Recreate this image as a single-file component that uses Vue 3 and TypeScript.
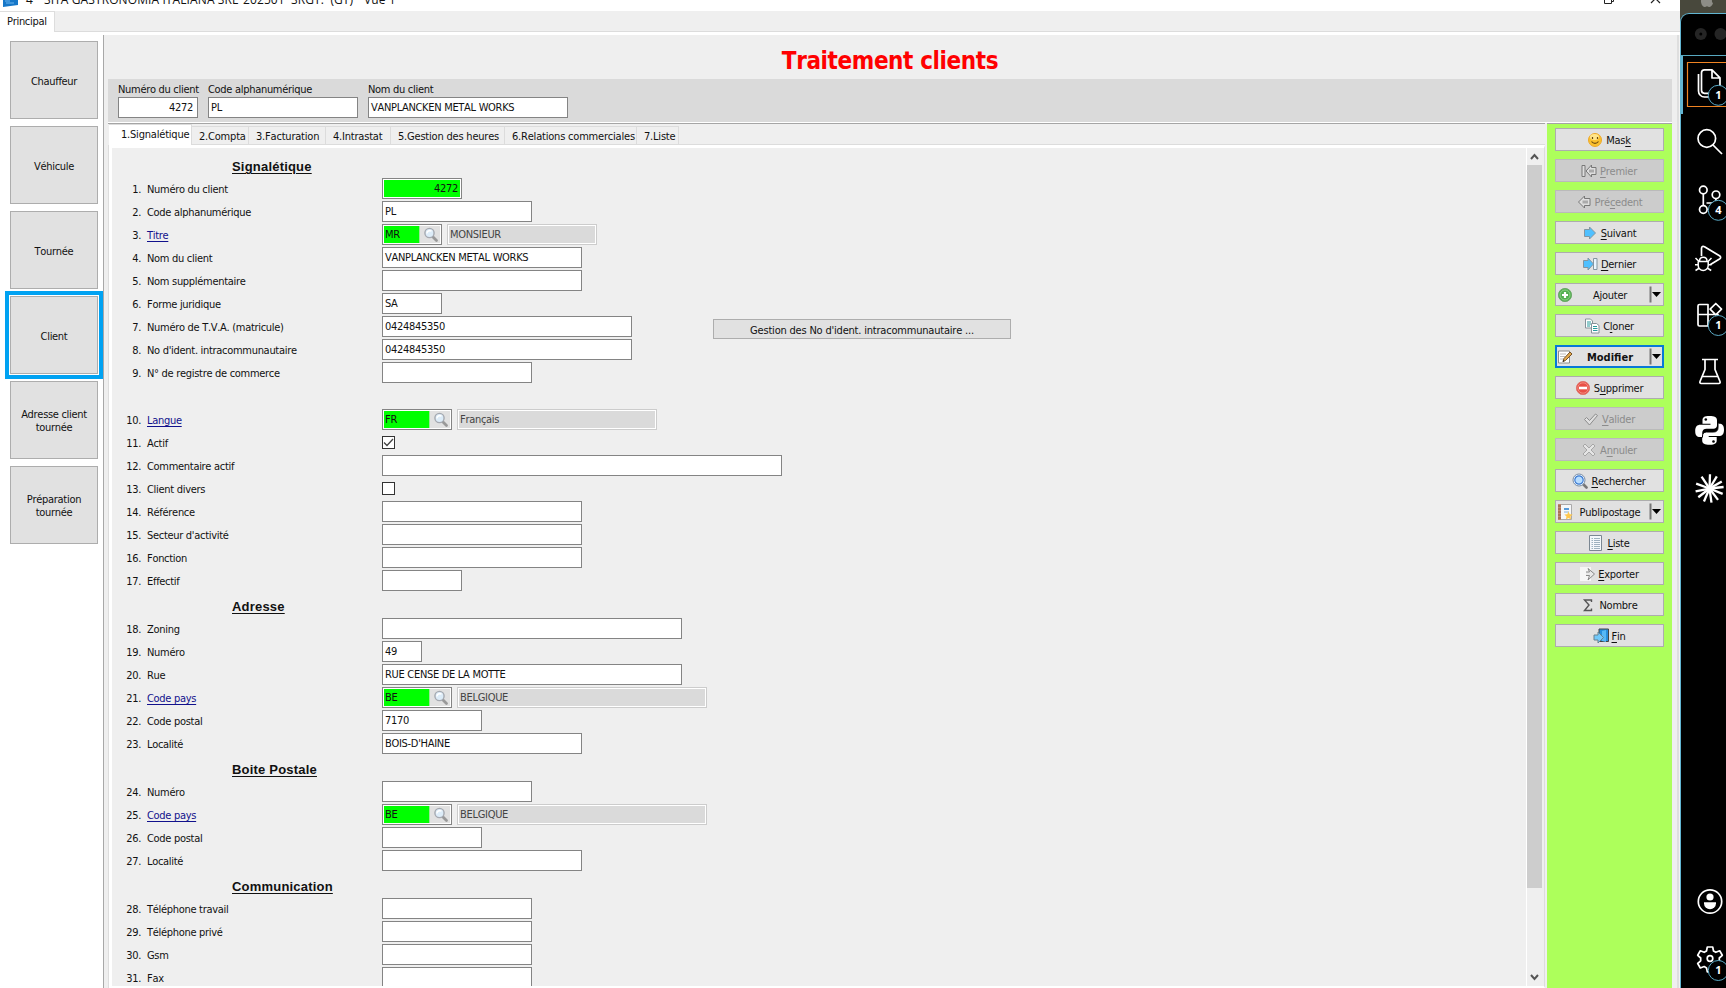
<script setup lang="ts">
interface Field {
  label: string
  kind?: 'text' | 'number' | 'lookup' | 'check'
  width?: number
  value?: string
  text?: string
  textWidth?: number
  gapBefore?: boolean
  checked?: boolean
}
interface Section { title: string; start: number; fields: Field[] }
interface Action {
  pre: string
  key: string
  post: string
  icon: string
  disabled?: boolean
  split?: boolean
  active?: boolean
}

const modules = ['Chauffeur', 'Véhicule', 'Tournée', 'Client', 'Adresse client\ntournée', 'Préparation\ntournée']

const tabs = [
  { name: '1.Signalétique', width: 83 },
  { name: '2.Compta', width: 57 },
  { name: '3.Facturation', width: 77 },
  { name: '4.Intrastat', width: 65 },
  { name: '5.Gestion des heures', width: 114 },
  { name: '6.Relations commerciales', width: 132 },
  { name: '7.Liste', width: 42 },
]

const sections: Section[] = [
  {
    title: 'Signalétique',
    start: 1,
    fields: [
      { label: 'Numéro du client', kind: 'number', width: 80, value: '4272' },
      { label: 'Code alphanumérique', width: 150, value: 'PL' },
      { label: 'Titre', kind: 'lookup', width: 60, value: 'MR', text: 'MONSIEUR', textWidth: 150 },
      { label: 'Nom du client', width: 200, value: 'VANPLANCKEN METAL WORKS' },
      { label: 'Nom supplémentaire', width: 200 },
      { label: 'Forme juridique', width: 60, value: 'SA' },
      { label: 'Numéro de T.V.A. (matricule)', width: 250, value: '0424845350' },
      { label: "No d'ident. intracommunautaire", width: 250, value: '0424845350' },
      { label: 'N° de registre de commerce', width: 150 },
      { label: 'Langue', kind: 'lookup', width: 70, value: 'FR', text: 'Français', textWidth: 200, gapBefore: true },
      { label: 'Actif', kind: 'check', checked: true },
      { label: 'Commentaire actif', width: 400 },
      { label: 'Client divers', kind: 'check' },
      { label: 'Référence', width: 200 },
      { label: "Secteur d'activité", width: 200 },
      { label: 'Fonction', width: 200 },
      { label: 'Effectif', width: 80 },
    ],
  },
  {
    title: 'Adresse',
    start: 18,
    fields: [
      { label: 'Zoning', width: 300 },
      { label: 'Numéro', width: 40, value: '49' },
      { label: 'Rue', width: 300, value: 'RUE CENSE DE LA MOTTE' },
      { label: 'Code pays', kind: 'lookup', width: 70, value: 'BE', text: 'BELGIQUE', textWidth: 250 },
      { label: 'Code postal', width: 100, value: '7170' },
      { label: 'Localité', width: 200, value: "BOIS-D'HAINE" },
    ],
  },
  {
    title: 'Boite Postale',
    start: 24,
    fields: [
      { label: 'Numéro', width: 150 },
      { label: 'Code pays', kind: 'lookup', width: 70, value: 'BE', text: 'BELGIQUE', textWidth: 250 },
      { label: 'Code postal', width: 100 },
      { label: 'Localité', width: 200 },
    ],
  },
  {
    title: 'Communication',
    start: 28,
    fields: [
      { label: 'Téléphone travail', width: 150 },
      { label: 'Téléphone privé', width: 150 },
      { label: 'Gsm', width: 150 },
      { label: 'Fax', width: 150 },
    ],
  },
]

const actions: Action[] = [
  { pre: 'Mas', key: 'k', post: '', icon: 'smile' },
  { pre: '', key: 'P', post: 'remier', icon: 'first', disabled: true },
  { pre: 'Pré', key: 'c', post: 'edent', icon: 'prev', disabled: true },
  { pre: '', key: 'S', post: 'uivant', icon: 'next' },
  { pre: '', key: 'D', post: 'ernier', icon: 'last' },
  { pre: 'Ajouter', key: '', post: '', icon: 'add', split: true },
  { pre: 'C', key: 'l', post: 'oner', icon: 'clone' },
  { pre: 'Modifier', key: '', post: '', icon: 'edit', split: true, active: true },
  { pre: 'S', key: 'u', post: 'pprimer', icon: 'remove' },
  { pre: '', key: 'V', post: 'alider', icon: 'check', disabled: true },
  { pre: 'A', key: 'n', post: 'nuler', icon: 'cross', disabled: true },
  { pre: '', key: 'R', post: 'echercher', icon: 'search' },
  { pre: 'Publipostage', key: '', post: '', icon: 'mail', split: true },
  { pre: '', key: 'L', post: 'iste', icon: 'list' },
  { pre: '', key: 'E', post: 'xporter', icon: 'export' },
  { pre: 'Nombre', key: '', post: '', icon: 'sum' },
  { pre: '', key: 'F', post: 'in', icon: 'exit' },
]

const rays = [2, 31, 60, 84, 112, 143, 172, 203, 232, 258, 290, 326]
</script>

<template>
  <div class="desktop">
    <div class="app">
      <header class="titlebar">
        <div class="title-content">
          <svg class="app-icon" width="15" height="14" viewBox="0 0 15 14"><path d="M0 1 15 0V12L0 14Z" fill="#1677c8" /><path d="M2 8h5M8 6h5M3 10h8" stroke="#6bb5ee" /></svg>
          <span class="t-num">4</span><span class="t-co">SITA GASTRONOMIA ITALIANA SRL</span><span class="t-period">202501</span><span class="t-app">SRGT.&nbsp; (GT)</span><span>Vue 1</span>
        </div>
        <div class="window-controls">
          <svg width="60" height="14" viewBox="0 0 60 14"><path d="M.5 3.5h7v7h-7zM2.500 1.500h7v7h-2" fill="none" stroke="#222" /><path d="m47 1 9 9m0-9-9 9" stroke="#222" stroke-width="1.200" /></svg>
        </div>
      </header>
      <div class="main-tabs"><span class="main-tab">Principal</span></div>

      <div class="workspace">
        <nav class="modules">
          <button v-for="m in modules" :key="m" class="module" :class="{ selected: m === 'Client' }"><span>{{ m }}</span></button>
        </nav>

        <main class="screen">
          <h1><span>Traitement clients</span></h1>
          <div class="summary">
            <label class="s1"><span>Numéro du client</span><i class="box right">4272</i></label>
            <label class="s2"><span>Code alphanumérique</span><i class="box">PL</i></label>
            <label class="s3"><span>Nom du client</span><i class="box">VANPLANCKEN METAL WORKS</i></label>
          </div>

          <div class="body">
            <div class="pane">
              <div class="tabs">
                <span v-for="(t, i) in tabs" :key="t.name" class="tab" :class="{ current: i === 0 }" :style="{ width: t.width + 'px' }">{{ t.name }}</span>
              </div>
              <div class="sheet">
                <div class="form">
                  <section v-for="s in sections" :key="s.title">
                    <h2>{{ s.title }}</h2>
                    <div v-for="(f, i) in s.fields" :key="i" class="row" :class="{ gap: f.gapBefore }">
                      <span class="no">{{ s.start + i }}.</span>
                      <span class="name"><span :class="{ link: f.kind === 'lookup' }">{{ f.label }}</span></span>
                      <template v-if="f.kind === 'lookup'">
                        <span class="lookup" :style="{ width: f.width + 'px' }">
                          <span class="code">{{ f.value }}</span>
                          <span class="lens">
                            <svg width="16" height="16" viewBox="0 0 16 16"><path d="m9.500 9.500 4 4" stroke="#999" stroke-width="2.800" stroke-linecap="round" /><circle cx="6.500" cy="6" r="4.600" fill="#dcecf8" stroke="#a5a9b0" stroke-width="1.400" /><path d="M3.800 6.500C4.200 4 6 3.200 8.500 4" stroke="#fff" stroke-width="1.500" fill="none" /></svg>
                          </span>
                        </span>
                        <span class="desc" :style="{ width: f.textWidth + 'px' }">{{ f.text }}</span>
                      </template>
                      <span v-else-if="f.kind === 'check'" class="checkbox">
                        <svg v-if="f.checked" width="11" height="11" viewBox="0 0 11 11"><path d="m1 5.500 3 3 6-6.500" fill="none" stroke="#444" stroke-width="1.300" /></svg>
                      </span>
                      <i v-else class="box" :class="{ 'right key': f.kind === 'number' }" :style="{ width: f.width + 'px' }"><span>{{ f.value }}</span></i>
                      <button v-if="i === 6 && s.start === 1" class="ident">Gestion des No d'ident. intracommunautaire ...</button>
                    </div>
                  </section>
                </div>
                <div class="scrollbar">
                  <svg width="15" height="17" viewBox="0 0 15 17"><path d="m4 11 3.500-4 3.500 4" fill="none" stroke="#555" stroke-width="2" /></svg>
                  <div class="thumb"></div>
                  <svg class="down" width="15" height="17" viewBox="0 0 15 17"><path d="m4 6 3.500 4L11 6" fill="none" stroke="#555" stroke-width="2" /></svg>
                </div>
              </div>
            </div>

            <aside class="actions">
              <button v-for="a in actions" :key="a.icon" class="action" :class="{ disabled: a.disabled, split: a.split, active: a.active }">
                <svg class="icon" width="16" height="16" viewBox="0 0 16 16">
                  <template v-if="a.icon === 'smile'"><circle cx="8" cy="8" r="6.500" fill="#fbc02c" stroke="#eda92a" /><ellipse cx="7.500" cy="5" rx="4.500" ry="3" fill="#ffe58a" /><path d="M5.500 5v2m5-2v2M4.500 9.500c2 2.500 5 2.500 7 0" fill="none" stroke="#6b4a10" stroke-width="1.200" /></template>
                  <g v-else-if="a.icon === 'first'" fill="#dedede" stroke="#777"><path d="M1 2.500h3v11H1zM15 4.500v7h-4.500V14L5 8l5.500-6v2.500z" /><path d="M8 6.500h5v3H8z" fill="#aaa" stroke="none" /></g>
                  <g v-else-if="a.icon === 'prev'" fill="#dedede" stroke="#777"><path d="M14 4.500v7H8.500V14l-6-6 6-6v2.500z" /><path d="M6.500 6.500H12v3H6.500z" fill="#aaa" stroke="none" /></g>
                  <path v-else-if="a.icon === 'next'" d="M2.500 4.500v7h5V14l6-6-6-6v2.500z" fill="#4fc0ff" stroke="#8495a0" />
                  <g v-else-if="a.icon === 'last'" fill="#4fc0ff" stroke="#8495a0"><path d="M11.500 2.500H15v11h-3.500z" fill="#e8f5ff" /><path d="M1.500 4.500v7H6V14l5.500-6L6 2v2.500z" /></g>
                  <template v-else-if="a.icon === 'add'"><circle cx="8" cy="8" r="6.600" fill="#53ae50" stroke="#6eaa6a" /><circle cx="8" cy="8" r="5" fill="none" stroke="#8bd184" /><path d="M8 5v6M5 8h6" stroke="#fff" stroke-width="2.200" /></template>
                  <g v-else-if="a.icon === 'clone'" fill="#fff" stroke="#879198"><path d="M1.500 1h5l2 2v7h-7z" /><path d="M3 4h4M3 6h4M3 8h3" stroke="#289a9c" /><path d="M7.500 5.500h5l2.500 2V15H7.500z" /><path d="M9 8.500h4M9 10.500h4.500M9 12.500h4.500" stroke="#289a9c" /></g>
                  <template v-else-if="a.icon === 'edit'"><path d="M1.500 2h11v12h-11z" fill="#fff" stroke="#8d8d8d" /><path d="M3 5h6M3 7.500h5M3 10h4" stroke="#bcbcbc" /><path d="m6 12.500 1-3L13 3l2 2-6.500 6.500z" fill="#e2a94d" stroke="#765126" /><path d="m5.500 13 1-2 1 1z" fill="#222" /></template>
                  <template v-else-if="a.icon === 'remove'"><circle cx="8" cy="8" r="6.600" fill="#e84f46" stroke="#df7770" /><circle cx="8" cy="8" r="5.200" fill="none" stroke="#f28b80" /><path d="M4 8h8" stroke="#fff" stroke-width="2.600" /></template>
                  <path v-else-if="a.icon === 'check'" d="m1.500 8.500 2-2 3 3 6-6.500 2 1.500-8 9.500z" fill="#dfdfdf" stroke="#8c8c8c" />
                  <path v-else-if="a.icon === 'cross'" d="m2 4 2-2 4 4 4-4 2 2-4 4 4 4-2 2-4-4-4 4-2-2 4-4z" fill="#e4e4e4" stroke="#a6a6a6" />
                  <template v-else-if="a.icon === 'search'"><path d="m11 11 3.500 3.500" stroke="#777" stroke-width="2.600" stroke-linecap="round" /><circle cx="7" cy="7" r="6" fill="#fff" stroke="#758ba5" /><circle cx="7" cy="7" r="4.200" fill="#b8ddff" stroke="#3878d0" stroke-width="1.200" /></template>
                  <template v-else-if="a.icon === 'mail'"><path d="M1.500.500h13v15h-13z" fill="#f5f7f9" stroke="#aaa" /><path d="M2.500 0v16" stroke="#c08a6c" stroke-width="3" /><path d="M1 2h3M1 5h3M1 8h3M1 11h3M1 14h3" stroke="#8c5a40" /><path d="M7 4h5v2H7z" fill="#579bd9" /><path d="M7 8h5" stroke="#8ab0d0" /><path d="m11.500 7.500 1.200 2.700 3 .3-2.200 2 .7 3-2.700-1.600L8.800 15.500l.7-3-2.200-2 3-.3z" fill="#ffc74d" /></template>
                  <template v-else-if="a.icon === 'list'"><path d="M1.500.500h12v15h-12z" fill="#f4f8fb" stroke="#7b8792" /><path d="M3.500 3.500h1.500m1 0h6m-8.500 2h1.500m1 0h6m-8.500 2h1.500m1 0h6m-8.500 2h1.500m1 0h6m-8.500 2h1.500m1 0h6m-8.500 2h1.500m1 0h6" stroke="#94a9b8" stroke-width=".9" /></template>
                  <template v-else-if="a.icon === 'export'"><path d="M1 1h11v14H1z" fill="#f6f6f6" /><path d="M7 6h3.500L9 2.500l6.500 5.500L9 14l1.500-4.500H7" fill="#e8e8e8" stroke="#888" /></template>
                  <path v-else-if="a.icon === 'sum'" d="M11.500 5V3h-7L9 8l-4.500 5.500h7v-2" fill="none" stroke="#555" stroke-width="1.400" />
                  <template v-else><path d="M6 1h9.500v12.500H6z" fill="#278edc" stroke="#444" /><path d="m9 3 4-1v12l-4-1z" fill="#56b9f6" /><path d="M1 7h4V4l5.500 5.500L5 15v-3H1z" fill="#72c9fa" stroke="#66818e" /></template>
                </svg>
                <span class="caption">{{ a.pre }}<u v-if="a.key">{{ a.key }}</u>{{ a.post }}</span>
                <svg v-if="a.split" class="drop" width="14" height="19" viewBox="0 0 14 19"><path d="M1.500 1.500v16" stroke="#777" stroke-width="2" /><path d="M3 7h9L7.500 12z" fill="#000" /></svg>
              </button>
            </aside>
          </div>
        </main>
      </div>
    </div>

    <div class="editor">
      <div class="menubar"><svg width="14" height="8" viewBox="0 0 14 8"><path d="M1 0h11c-.5 1.500.5 3 1 3.300C12 6 10.500 7 9.500 7S8 6.200 7 6.200 5.500 7 4.500 7C2.500 7 .5 3 1 0z" fill="#8d8d86" /></svg></div>
      <div class="editor-window">
        <svg class="activity" width="46" height="975" viewBox="1680 13 46 975" fill="none" stroke="#fff" stroke-width="1.700" stroke-linejoin="round">
          <g stroke="none"><circle cx="1700.800" cy="34" r="6" fill="#252525" /><circle cx="1700.800" cy="34" r="1.500" fill="#000" /><circle cx="1720.500" cy="34" r="6" fill="#252525" /></g>
          <path d="M1681 55.500h45" stroke="#57a8c0" stroke-width="1" />
          <path d="M1681.500 56v58" stroke="#62b5d2" stroke-width="3" />
          <path d="M1727 62.500h-39.500v44H1727" stroke="#ef8322" stroke-width="1.200" stroke-linejoin="miter" />
          <path d="M1704.500 69.800h7.500l8 8v12.500a3 3 0 0 1-3 3h-12.500a3 3 0 0 1-3-3V72.800a3 3 0 0 1 3-3zM1712 70v8h8M1698.500 74v17a6 6 0 0 0 6 6h8" />
          <circle cx="1706.800" cy="138.500" r="8.800" /><path d="m1713 145 9 9" />
          <circle cx="1703.300" cy="190" r="3.800" /><circle cx="1716" cy="194.800" r="3.800" /><circle cx="1703.300" cy="209.500" r="3.800" /><path d="M1703.300 194v11.500M1716 199c0 3-2 4-5 4h-4.500" />
          <path d="M1701.500 256v-7.500c0-2 1.500-2.500 3-1.700l15 9c1.500 1 1.500 2.200 0 3.200l-9 5.500" /><path d="M1698.200 261.500h10v4a5 5 0 0 1-10 0zM1699.500 261c0-5 7.500-5 7.500 0M1695.500 258l3 3m10 0 3-3M1695 264.800h3m10.500 0h3M1695.500 270.500l3.200-2m9.300 0 3.200 2" stroke-width="1.500" />
          <path d="M1699.500 304.500h8.500v10h-10V306a1.500 1.500 0 0 1 1.500-1.500zM1698 314.500h10V326h-8.500a1.500 1.500 0 0 1-1.500-1.500zM1708 314.500h10v10.500a1 1 0 0 1-1 1h-9zM1715.800 303.500l5.700 5.700-5.700 5.700-5.700-5.700z" />
          <path d="M1702 359.500h16M1705 360v9.500l-5 12c-.4 1.200 0 2 1.200 2h17.600c1.200 0 1.600-.8 1.200-2l-5-12V360M1702.300 376.500h15.400" />
          <path d="M1709.500 416c-5.500 0-7 1.500-7 4.200v3.500h8v1h-10c-3.600 0-5.300 2-5.300 6.300 0 4.200 1.500 6 5 6h2v-4c0-2.700 1.700-4.200 4.500-4.200h6.800c2.200 0 3.500-1.200 3.500-3.500v-5c0-3-2.500-4.300-7.500-4.300z" fill="#fff" stroke="none" />
          <path d="M1709.700 444.800c5.500 0 7-1.500 7-4.200v-3.500h-8v-1h10c3.600 0 5.300-2 5.300-6.300 0-4.200-1.500-6-5-6h-1v4c0 2.700-1.700 4.200-4.500 4.200h-6.800c-2.200 0-4.500 1.200-4.500 3.500v5c0 3 2.500 4.300 7.500 4.300z" fill="#fff" stroke="none" />
          <path d="M1718 424v3.500c0 3-1.500 4.500-4.500 4.500h-7c-2.500 0-4 1.500-4 4v1.500" stroke="#000" stroke-width="1" />
          <circle cx="1705.800" cy="419.500" r="1.300" fill="#000" stroke="none" /><circle cx="1713.500" cy="441.500" r="1.300" fill="#000" stroke="none" />
          <path v-for="r in rays" :key="r" d="M1709.500 488.500v-14.200" stroke-width="2.300" :transform="`rotate(${r} 1709.500 488.500)`" />
          <circle cx="1710" cy="901.500" r="11.700" /><g fill="#fff" stroke="none"><circle cx="1710" cy="897" r="3.600" /><path d="M1704 902.300h12v1a6 6 0 0 1-12 0z" /></g>
          <path d="M1707.300 947h5.400l.8 4 2.300 1.300 3.900-1.500 2.600 4.500-3 2.700v2.800l3 2.700-2.600 4.500-3.900-1.500-2.300 1.400-.8 4h-5.400l-.8-4-2.300-1.400-3.900 1.500-2.600-4.500 3-2.700v-2.800l-3-2.700 2.600-4.500 3.900 1.500 2.300-1.300z" /><circle cx="1710" cy="958.500" r="2.800" />
          <g fill="#000" stroke="#5aaac6" stroke-width="1"><circle cx="1718.300" cy="95.300" r="10" /><circle cx="1718.300" cy="210.300" r="10" /><circle cx="1718.300" cy="325.500" r="10" /><circle cx="1718.300" cy="970.500" r="10" /></g>
          <g class="badges" fill="#fff" stroke="none" text-anchor="middle"><text x="1718.500" y="99.300">1</text><text x="1718.500" y="214.300">4</text><text x="1718.500" y="329">1</text><text x="1718.500" y="974">1</text></g>
        </svg>
      </div>
    </div>
  </div>
</template>

<style>
html, body { margin: 0; background: #efefef; overflow: hidden; }
</style>

<style scoped>
* { box-sizing: border-box; }
.desktop { display: flex; width: 1726px; height: 988px; overflow: hidden; color: #111; font: 11px/13px "DejaVu Sans Condensed", "DejaVu Sans", sans-serif; font-stretch: condensed; font-kerning: none; letter-spacing: -0.3px; }
button { font: inherit; letter-spacing: inherit; color: inherit; padding: 0; margin: 0; border-radius: 0; font-kerning: none; }
i { font-style: normal; }
.app { width: 1680px; height: 988px; display: flex; flex-direction: column; background: #f3f3f3; }
.titlebar { height: 11px; background: #fff; display: flex; justify-content: space-between; overflow: hidden; flex: none; }
.title-content { display: flex; margin-top: -7px; height: 14px; padding-left: 3px; font: 12px/14px "Open Sans", "Noto Sans", sans-serif; letter-spacing: 0.1px; white-space: nowrap; }
.title-content > * { flex: none; }
.app-icon { margin-right: 8px; }
.t-num { width: 18px; }
.t-co { width: 199px; }
.t-period { width: 48px; }
.t-app { width: 73px; }
.window-controls { width: 76px; margin-top: -7px; }
.main-tabs { height: 24px; flex: none; border-bottom: 3px solid #fff; box-shadow: inset 0 -1px #dcdcdc; background: #efefef; display: flex; }
.main-tab { width: 55px; height: 21px; background: #fff; border-right: 1px solid #ddd; border-top: 1px solid #ddd; padding: 3px 0 0 7px; }
.workspace { flex: 1; display: flex; min-height: 0; border-right: 2px solid #dedede; margin-right: 1px; }
.modules { width: 103px; background: #fff; padding: 6px 0 0 10px; display: flex; flex-direction: column; gap: 7px; flex: none; }
.module { width: 88px; height: 78px; flex: none; border: 1px solid #adadad; background: #e1e1e1; white-space: pre-line; text-align: center; }
.module span { display: block; padding-top: 2px; }
.module.selected { outline: 4px solid #00a2f2; outline-offset: 1px; }
.screen { flex: 1; border-left: 1px solid #a8a8a8; background: #efefef; padding: 0 5px 0 4px; display: flex; flex-direction: column; min-width: 0; }
h1 { margin: 0; height: 44px; text-align: center; color: #f00; font: bold 24px/52px "DejaVu Sans Condensed", "DejaVu Sans", sans-serif; font-stretch: condensed; font-kerning: none; letter-spacing: -0.4px; }
.summary { height: 43px; flex: none; background: #dadada; display: flex; gap: 10px; padding: 4px 0 0 10px; }
.summary label { display: flex; flex-direction: column; }
.summary span { height: 14px; white-space: nowrap; }
.s1 { width: 80px; }
.s2 { width: 150px; }
.s3 { width: 200px; }
.box { display: block; height: 21px; border: 1px solid #848484; background: #fff; padding: 3px 4px 0 2px; white-space: nowrap; }
.right { text-align: right; }
.key { padding: 1px; }
.key span { display: block; height: 17px; background: #0f0; padding: 2px 2px 0 0; }
.body { flex: 1; min-height: 0; display: flex; border-top: 1px solid #fff; }
.pane { flex: 1; border-top: 1px solid #a5a5a5; display: flex; flex-direction: column; margin-right: 2px; padding-left: 1px; min-width: 0; }
.tabs { height: 21px; display: flex; align-items: flex-end; flex: none; border-bottom: 1px solid #dcdcdc; }
.tab { height: 18px; padding: 3px 0 0 7px; border: 1px solid #dcdcdc; border-left: 0; border-bottom: 0; white-space: nowrap; letter-spacing: -0.2px; }
.tab.current { height: 21px; margin-bottom: -1px; background: #fff; padding: 3px 0 0 12px; }
.sheet { flex: 1; min-height: 0; display: flex; border: 3px solid #fff; border-bottom-width: 2px; border-right: 1px solid #dcdcdc; box-shadow: -1px 0 #ddd; }
.form { flex: 1; padding-top: 5px; overflow: hidden; border-right: 1px solid #fff; }
h2 { margin: 0; height: 25px; padding-left: 120px; font: bold 13px/27px "Liberation Sans", sans-serif; letter-spacing: 0.2px; text-decoration: underline; text-underline-offset: 2px; text-decoration-thickness: 1px; }
.row { height: 23px; display: flex; align-items: flex-start; }
.row.gap { margin-top: 24px; }
.no { width: 29px; text-align: right; padding-top: 5px; }
.name { width: 241px; padding: 5px 0 0 6px; }
.link { color: #11118c; text-decoration: underline; text-underline-offset: 2px; }
.lookup { height: 21px; display: flex; border: 1px solid #848484; background: #fff; padding: 1px; }
.code { flex: 1; background: #0f0; padding: 2px 0 0 1px; }
.lens { width: 21px; background: #e1e1e1; border-left: 1px solid #9be79b; padding: 1px 0 0 3px; }
.lens svg { display: block; }
.desc { height: 21px; margin-left: 5px; background: #dadada; border: 1px solid #ccc; box-shadow: inset 0 0 0 1px #fff; padding: 3px 0 0 2px; color: #444; }
.checkbox { width: 13px; height: 13px; margin-top: 4px; border: 1px solid #333; background: #fff; }
.checkbox svg { display: block; }
.ident { width: 298px; height: 20px; margin: 3px 0 0 81px; border: 1px solid #adadad; background: #e1e1e1; padding-top: 2px; text-align: center; letter-spacing: -0.2px; }
.scrollbar { width: 15px; margin-right: 2px; display: flex; flex-direction: column; }
.scrollbar svg { display: block; flex: none; }
.thumb { height: 723px; background: #cdcdcd; }
.down { margin-top: auto; }
.actions { width: 125px; background: #adff5b; border-top: 1px solid #a5a5a5; padding: 4px 0 0 8px; display: flex; flex-direction: column; gap: 8px; flex: none; }
.action { width: 109px; height: 23px; flex: none; border: 1px solid #adadad; background: #e1e1e1; display: flex; align-items: center; justify-content: center; gap: 3px; padding-right: 1px; white-space: nowrap; letter-spacing: -0.25px; }
.caption { padding-top: 2px; }
.caption u { text-underline-offset: 2px; }
.icon { flex: none; }
.disabled { background: #ccc; border-color: #bababa; color: #8b8b8b; }
.split { justify-content: flex-start; gap: 0; padding: 0 0 0 1px; }
.split .caption { flex: 1; text-align: center; padding-right: 2px; }
.active { border: 2px solid #0878d7; padding-left: 0; font-weight: bold; letter-spacing: 0; }
.active .drop { margin-right: -1px; }
.editor { width: 46px; height: 988px; background: #48483c; flex: none; }
.menubar { height: 13px; padding-left: 20px; }
.menubar svg { display: block; }
.editor-window { height: 975px; background: #000; border-left: 1px solid #62b5d2; border-top: 1px solid #62b5d2; border-top-left-radius: 9px; overflow: hidden; }
.activity { display: block; margin: -1px 0 0 -1px; }
.badges { font: bold 11px "Open Sans", sans-serif; letter-spacing: 0; }
</style>
